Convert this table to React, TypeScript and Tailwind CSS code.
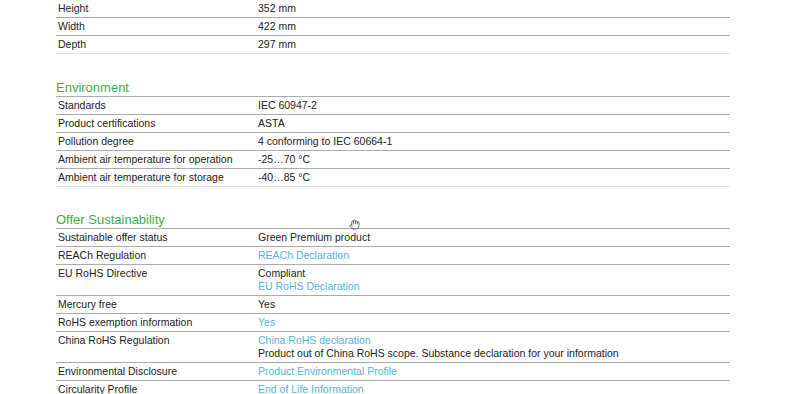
import { Hand } from 'lucide-react';

type Cell = { text: string; link?: boolean };
type Row = { label: string; values: Cell[] };

const dimensions: Row[] = [
  { label: 'Height', values: [{ text: '352 mm' }] },
  { label: 'Width', values: [{ text: '422 mm' }] },
  { label: 'Depth', values: [{ text: '297 mm' }] },
];

const environment: Row[] = [
  { label: 'Standards', values: [{ text: 'IEC 60947-2' }] },
  { label: 'Product certifications', values: [{ text: 'ASTA' }] },
  { label: 'Pollution degree', values: [{ text: '4 conforming to IEC 60664-1' }] },
  { label: 'Ambient air temperature for operation', values: [{ text: '-25…70 °C' }] },
  { label: 'Ambient air temperature for storage', values: [{ text: '-40…85 °C' }] },
];

const sustainability: Row[] = [
  { label: 'Sustainable offer status', values: [{ text: 'Green Premium product' }] },
  { label: 'REACh Regulation', values: [{ text: 'REACh Declaration', link: true }] },
  {
    label: 'EU RoHS Directive',
    values: [{ text: 'Compliant' }, { text: 'EU RoHS Declaration', link: true }],
  },
  { label: 'Mercury free', values: [{ text: 'Yes' }] },
  { label: 'RoHS exemption information', values: [{ text: 'Yes', link: true }] },
  {
    label: 'China RoHS Regulation',
    values: [
      { text: 'China RoHS declaration', link: true },
      { text: 'Product out of China RoHS scope. Substance declaration for your information' },
    ],
  },
  { label: 'Environmental Disclosure', values: [{ text: 'Product Environmental Profile', link: true }] },
  { label: 'Circularity Profile', values: [{ text: 'End of Life Information', link: true }] },
];

function SpecRows({ rows }: { rows: Row[] }) {
  return (
    <div>
      {rows.map((row, i) => {
        const last = i === rows.length - 1;
        return (
          <div
            key={row.label}
            className={`flex min-h-[18px] border-b pt-[2px] pb-[2px] leading-[13px] ${
              last ? 'border-[#e4e4e4]' : 'border-[#ababab]'
            }`}
          >
            <div className="w-[202px] shrink-0 pl-[2px]">{row.label}</div>
            <div className="flex flex-col">
              {row.values.map((v) => (
                <span key={v.text} className={v.link ? 'text-[#52b3e0]' : ''}>
                  {v.text}
                </span>
              ))}
            </div>
          </div>
        );
      })}
    </div>
  );
}

function Section({ title, rows }: { title: string; rows: Row[] }) {
  return (
    <section>
      <h2 className="border-b border-[#ababab] pt-[1px] text-[13px] leading-[16px] text-[#3cae4a]">
        {title}
      </h2>
      <SpecRows rows={rows} />
    </section>
  );
}

export default function App() {
  return (
    <div className="relative h-[394px] w-[800px] overflow-hidden bg-white font-['Liberation_Sans',Arial,sans-serif] text-[10.5px] text-[#222]">
      <div className="ml-[56px] w-[674px]">
        <SpecRows rows={dimensions} />
        <div className="mt-[25px]">
          <Section title="Environment" rows={environment} />
        </div>
        <div className="mt-[24px]">
          <Section title="Offer Sustainability" rows={sustainability} />
        </div>
      </div>
      {/* pointer hovering over the table */}
      <Hand className="absolute left-[349px] top-[219px] h-[11px] w-[11px] text-[#444]" strokeWidth={1.6} />
    </div>
  );
}
